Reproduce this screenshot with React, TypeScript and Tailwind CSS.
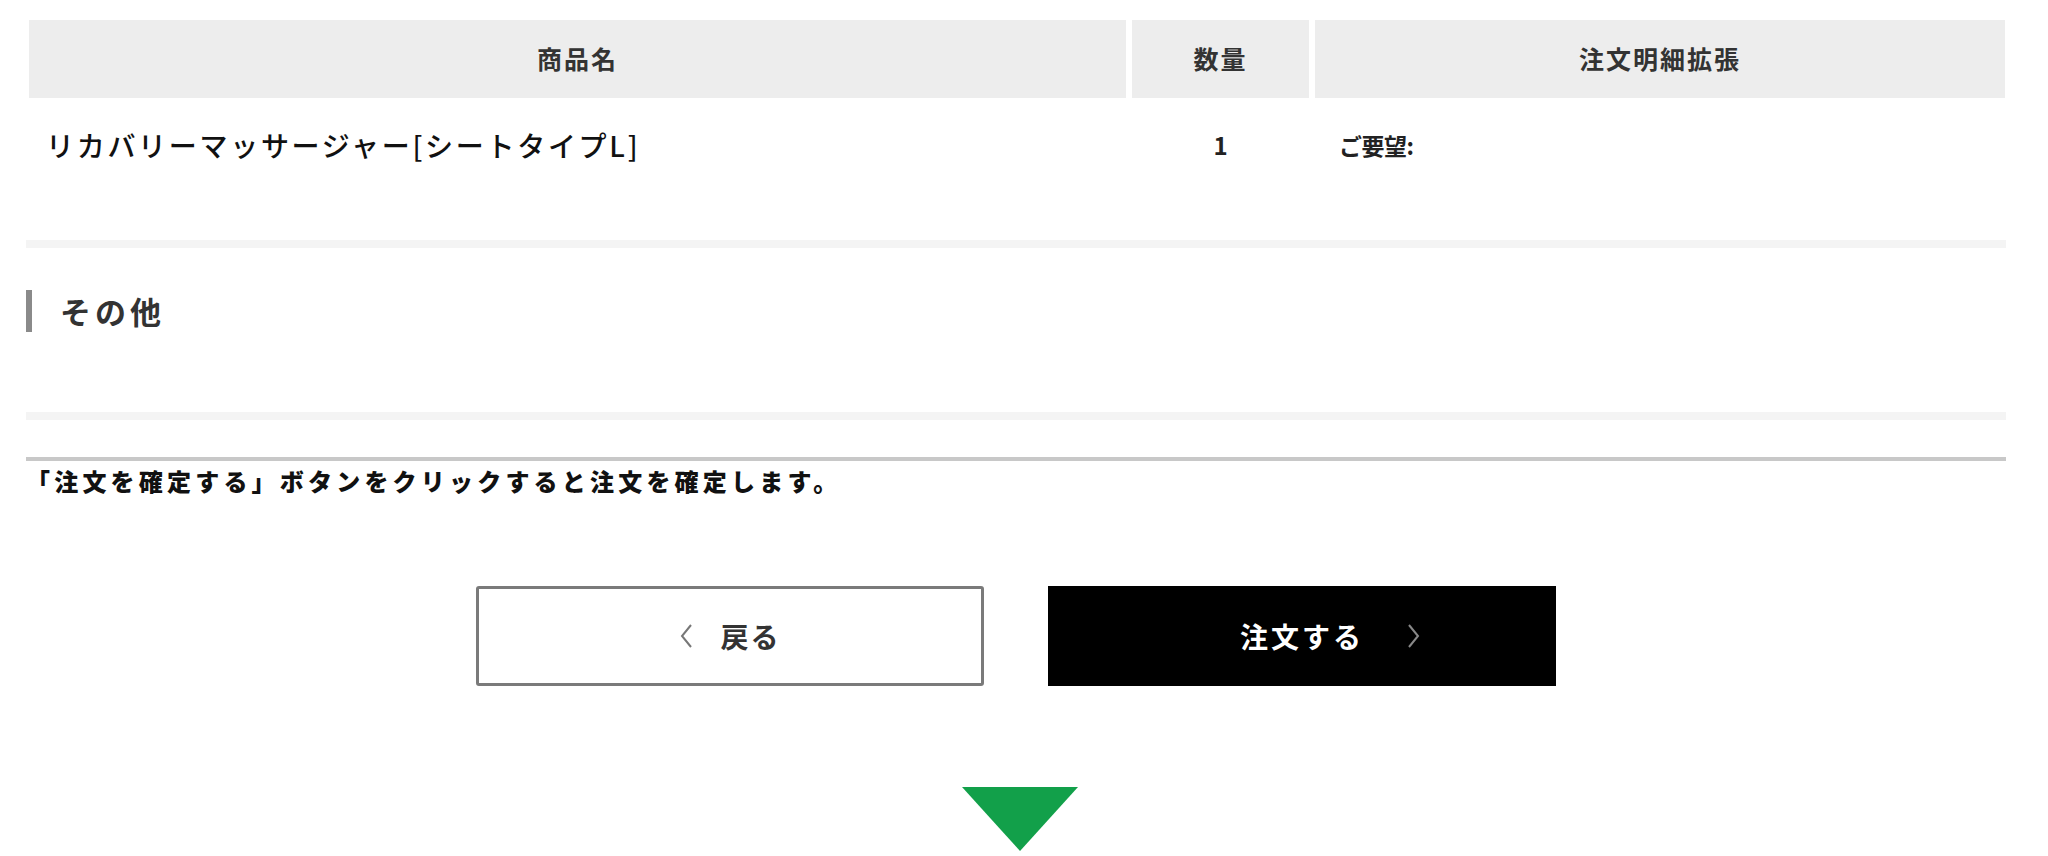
const font = "font-['Noto_Sans_CJK_JP','Noto_Sans',sans-serif]"

function Chevron({ dir, className }: { dir: "left" | "right"; className?: string }) {
  return (
    <svg width="14" height="26" viewBox="0 0 14 26" className={className}>
      <path
        d={dir === "left" ? "M12 2 L3 13 L12 24" : "M2 2 L11 13 L2 24"}
        fill="none"
        stroke="currentColor"
        strokeWidth="2"
      />
    </svg>
  )
}

export default function App() {
  return (
    <div className={`h-[856px] w-[2048px] overflow-hidden bg-white ${font}`}>
      <div className="ml-[26px] w-[1980px] pt-[20px]">
        {/* order lines */}
        <div className="ml-[3px] grid grid-cols-[1097px_177px_690px] gap-x-[6px]">
          <div className="flex h-[78px] items-center justify-center bg-[#ededed] text-[25px] font-bold tracking-[2px] text-[#333]">
            商品名
          </div>
          <div className="flex h-[78px] items-center justify-center bg-[#ededed] text-[25px] font-bold tracking-[2px] text-[#333]">
            数量
          </div>
          <div className="flex h-[78px] items-center justify-center bg-[#ededed] text-[25px] font-bold tracking-[2px] text-[#333]">
            注文明細拡張
          </div>

          <div className="h-[142px] pl-[17px] pt-[29px] text-[28px] font-medium leading-[36px] tracking-[2.7px] text-[#111]">
            リカバリーマッサージャー[シートタイプL]
          </div>
          <div className="h-[142px] pt-[29px] text-center text-[24px] font-bold leading-[36px] text-[#222]">
            1
          </div>
          <div className="h-[142px] pl-[24px] pt-[29px] text-[23px] font-bold leading-[36px] tracking-[-0.5px] text-[#222]">
            ご要望:
          </div>
        </div>

        <div className="h-[8px] bg-[#f4f4f4]" />

        {/* other */}
        <div className="flex h-[164px] items-start pt-[42px]">
          <div className="h-[42px] w-[6px] bg-[#8a8a8a]" />
          <h3 className="ml-[28px] text-[31px] font-bold leading-[42px] tracking-[4px] text-[#333]">
            その他
          </h3>
        </div>

        <div className="h-[8px] bg-[#f4f4f4]" />

        <div className="mt-[37px] h-[4px] bg-[#c8c8c8]" />
        <p className="mt-[4px] text-[24px] font-black leading-[32px] tracking-[4.2px] text-[#111]">
          「注文を確定する」ボタンをクリックすると注文を確定します。
        </p>

        {/* actions */}
        <div className="mt-[89px] flex justify-center gap-[64px]">
          <button className="flex h-[100px] w-[508px] items-center justify-center gap-[27px] rounded-[3px] border-[3px] border-[#7a7a7a] bg-white">
            <Chevron dir="left" className="text-[#777]" />
            <span className="text-[28px] font-bold tracking-[2px] text-[#333]">戻る</span>
          </button>
          <button className="flex h-[100px] w-[508px] items-center justify-center gap-[43px] bg-black pl-[57px]">
            <span className="text-[28px] font-bold tracking-[3px] text-white">注文する</span>
            <Chevron dir="right" className="text-[#888]" />
          </button>
        </div>

        <div className="mt-[101px] flex justify-center pl-[8px]">
          <svg width="116" height="64" viewBox="0 0 116 64">
            <polygon points="0,0 116,0 58,64" fill="#12a04a" />
          </svg>
        </div>
      </div>
    </div>
  )
}
